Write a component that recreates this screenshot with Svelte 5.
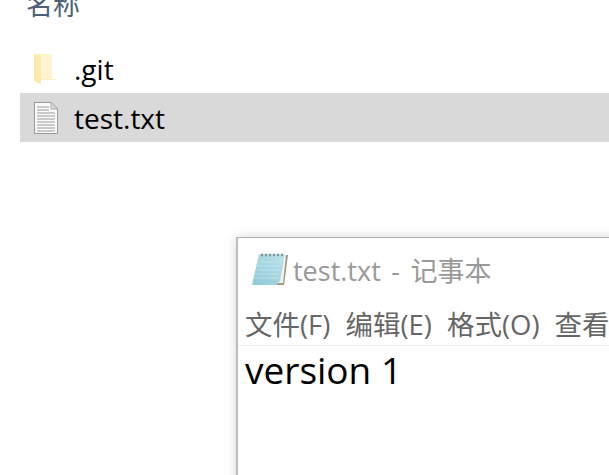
<script>
  const menus = ['文件(F)', '编辑(E)', '格式(O)', '查看'];
</script>

<div class="page">
  <div class="explorer">
    <div class="head">名称</div>
    <div class="row">
      <svg class="ic" width="24" height="32" viewBox="0 0 24 32">
        <path d="M0 1H18V26H22V27H7V31L0 28Z" fill="#fdeeba"/>
        <path d="M7 1L18 1V26H7Z" fill="#fdf3cf"/>
        <path d="M0 1L7 5V31L0 28Z" fill="#fce9ae"/>
      </svg>
      <span>.git</span>
    </div>
    <div class="row sel">
      <svg class="ic" width="24" height="32" viewBox="0 0 24 32">
        <path d="M.5.5H17L23.5 7V31.5H.5Z" fill="#fafafa" stroke="#999"/>
        <path d="M17 .5V7H23.5Z" fill="#ddd" stroke="#aaa"/>
        <path d="M3 5H15M3 8H15M3 11H21M3 14H21M3 17H21M3 20H21M3 23H21M3 26H21M3 29H21" stroke="#bbb" stroke-width="1.4"/>
      </svg>
      <span>test.txt</span>
    </div>
  </div>

  <div class="win">
    <div class="title">
      <svg width="38" height="36" viewBox="0 0 38 36">
        <defs>
          <linearGradient id="pad" x1="0" y1="1" x2="1" y2="0">
            <stop offset="0" stop-color="#8cc8d8"/>
            <stop offset="1" stop-color="#bfe3ea"/>
          </linearGradient>
        </defs>
        <path d="M9 3H36L32 33H3Z" fill="#f4f4ee"/>
        <path d="M9 33H33L37 3H35L32 31H9Z" fill="#a39a7c"/>
        <path d="M8 2H34L29 29L26 33H1Z" fill="url(#pad)"/>
        <path d="M7 10H30M6 14H29M5 18H28M4 22H28M3 26H27" stroke="#c6e7ee" stroke-width="1" opacity=".7"/>
        <path d="M10 3H33" stroke="#7f949c" stroke-width="2.5" stroke-dasharray="2 2"/>
      </svg>
      <span>test.txt - 记事本</span>
    </div>
    <div class="menu">
      {#each menus as m}<span>{m}</span>{/each}
    </div>
    <div class="body">version 1</div>
  </div>
</div>

<style>
  :global(body) { margin: 0; background: #fff; }
  .page {
    position: relative;
    width: 609px;
    height: 475px;
    overflow: hidden;
    background: #fff;
    font-family: "Open Sans", "Noto Sans CJK SC", sans-serif;
  }
  .explorer { padding: 0 0 0 20px; }
  .head {
    height: 57px;
    margin-top: -13px;
    padding-left: 6px;
    font-size: 27px;
    line-height: 36px;
    color: #4c607a;
  }
  .row {
    display: flex;
    align-items: center;
    height: 49px;
    padding-left: 14px;
    font-size: 28px;
    color: #000;
  }
  .row span { margin-left: 16px; }
  .ic { flex: none; }
  .sel { background: #d9d9d9; }
  .win {
    position: absolute;
    left: 236px;
    top: 237px;
    width: 400px;
    height: 260px;
    background: #fff;
    border-top: 1px solid #b4b4b4;
    border-left: 2px solid #bdbdbd;
    box-shadow: 0 0 10px rgba(0, 0, 0, .16);
    box-sizing: border-box;
  }
  .title {
    display: flex;
    align-items: center;
    gap: 4px;
    height: 63px;
    padding-left: 13px;
    font-size: 27px;
    color: #999;
    white-space: nowrap;
    word-spacing: 3.5px;
  }
  .menu {
    display: flex;
    gap: 15px;
    align-items: center;
    height: 44px;
    padding-left: 7px;
    font-size: 27.5px;
    color: #666;
    border-bottom: 1px solid #f0f0f0;
    white-space: nowrap;
  }
  .body {
    padding-left: 7px;
    font-size: 37px;
    line-height: 48px;
    color: #000;
  }
</style>
